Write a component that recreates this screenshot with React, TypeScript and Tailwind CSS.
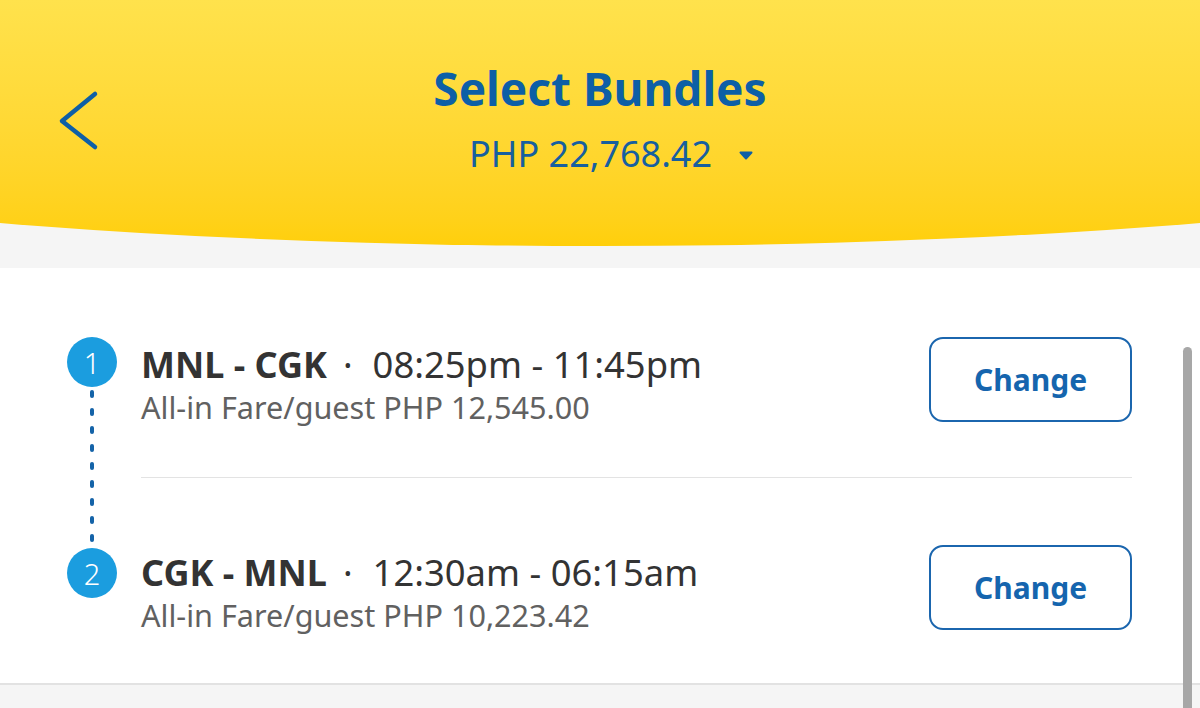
import React from "react";

function Dots() {
  return (
    <div className="flex flex-col items-center gap-[10px] mt-[3px] h-[158px]">
      {Array.from({ length: 9 }).map((_, i) => (
        <div key={i} className="w-[4px] h-[8px] rounded-full bg-[#1463a8]" />
      ))}
    </div>
  );
}

function Circle({ n }: { n: string }) {
  return (
    <div className="w-[50px] h-[50px] rounded-full bg-[#1b9ddf] flex items-center justify-center text-white text-[29px] leading-none font-light">
      {n}
    </div>
  );
}

function Row({ route, time, fare }: { route: string; time: string; fare: string }) {
  return (
    <div className="flex items-start h-[85px]">
      <div className="flex-1 mt-[5px]">
        <div className="flex items-baseline text-[#333333] text-[36px] leading-[44px] whitespace-nowrap">
          <span className="font-bold">{route}</span>
          <span className="ml-[16px] mr-[20px] text-[36px]">·</span>
          <span className="text-[36.4px]">{time}</span>
        </div>
        <div className="text-[#616161] text-[30.6px] leading-[40px] whitespace-nowrap">{fare}</div>
      </div>
      <button className="w-[203px] h-[85px] rounded-[14px] border-2 border-[#1b66ae] bg-white text-[#1565ae] text-[30px] font-bold flex items-center justify-center">
        Change
      </button>
    </div>
  );
}

export default function App() {
  return (
    <div
      className="relative w-[1200px] h-[708px] overflow-hidden bg-[#f5f5f5]"
      style={{ fontFamily: '"Noto Sans", "Open Sans", sans-serif' }}
    >
      <header className="relative h-[246px] bg-linear-to-b from-[#ffe24c] to-[#ffcf0a] [clip-path:ellipse(1200px_172px_at_50%_74px)] pt-[60px]">
        <svg
          className="absolute left-[56px] top-[88px]"
          width="46"
          height="64"
          viewBox="0 0 46 64"
          fill="none"
        >
          <polyline
            points="39,6 6,33 39,59"
            stroke="#0e5fa6"
            strokeWidth="4.5"
            strokeLinecap="round"
            strokeLinejoin="round"
          />
        </svg>
        <h1 className="text-center text-[#0d5fa6] text-[46px] leading-[56px] font-bold">Select Bundles</h1>
        <div className="mt-[16px] flex justify-center items-center pl-[22px]">
          <span className="text-[#175f9f] text-[36px] leading-[44px]">PHP 22,768.42</span>
          <svg className="ml-[27px] mt-[2px]" width="14" height="9" viewBox="0 0 14 9">
            <path d="M1.5 1.5 H12.5 L7 7.5 Z" fill="#0e5fa6" stroke="#0e5fa6" strokeWidth="2" strokeLinejoin="round" />
          </svg>
        </div>
      </header>

      <section className="mt-[22px] h-[417px] bg-white border-b-2 border-[#e2e2e2] pt-[69px] pl-[67px] pr-[68px] flex gap-[24px]">
        <div className="w-[50px] flex flex-col items-center">
          <Circle n="1" />
          <Dots />
          <Circle n="2" />
        </div>
        <div className="flex-1 flex flex-col">
          <Row route="MNL - CGK" time="08:25pm - 11:45pm" fare="All-in Fare/guest PHP 12,545.00" />
          <div className="mt-[55px] h-px bg-[#e3e3e3]" />
          <div className="mt-[67px]">
            <Row route="CGK - MNL" time="12:30am - 06:15am" fare="All-in Fare/guest PHP 10,223.42" />
          </div>
        </div>
      </section>

      <div className="absolute right-[8px] top-[347px] w-[9px] h-[400px] rounded-full bg-[#a7a7a7]" />
    </div>
  );
}
